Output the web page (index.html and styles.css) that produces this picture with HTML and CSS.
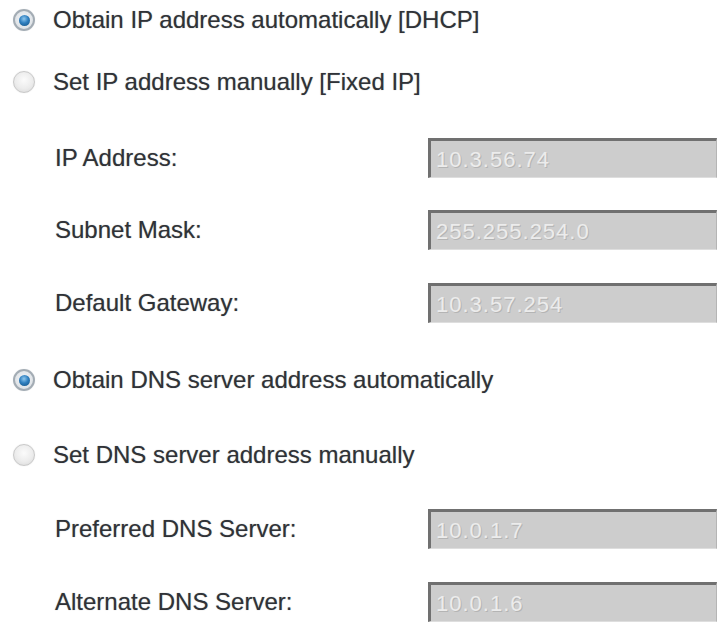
FILE: index.html
```html
<!DOCTYPE html>
<html>
<head>
<meta charset="utf-8">
<link rel="stylesheet" href="styles.css">
</head>
<body>
<div class="form">
  <div class="row radio-row r1"><span class="radio checked"><span class="dot"></span></span><span class="text">Obtain IP address automatically [DHCP]</span></div>
  <div class="row radio-row r2"><span class="radio"></span><span class="text">Set IP address manually [Fixed IP]</span></div>
  <div class="row field-row r3"><span class="label">IP Address:</span><div class="input">10.3.56.74</div></div>
  <div class="row field-row r4"><span class="label">Subnet Mask:</span><div class="input">255.255.254.0</div></div>
  <div class="row field-row r5"><span class="label">Default Gateway:</span><div class="input">10.3.57.254</div></div>
  <div class="row radio-row r6"><span class="radio checked"><span class="dot"></span></span><span class="text">Obtain DNS server address automatically</span></div>
  <div class="row radio-row r7"><span class="radio"></span><span class="text">Set DNS server address manually</span></div>
  <div class="row field-row r8"><span class="label">Preferred DNS Server:</span><div class="input">10.0.1.7</div></div>
  <div class="row field-row r9"><span class="label">Alternate DNS Server:</span><div class="input">10.0.1.6</div></div>
</div>
</body>
</html>
```
FILE: styles.css
```css
html, body {
  margin: 0;
  padding: 0;
  background: #ffffff;
}
body {
  font-family: "Liberation Sans", Arial, sans-serif;
  color: #2f3237;
  overflow: hidden;
}
.form {
  display: flex;
  flex-direction: column;
  width: 717px;
}
.row {
  height: 40px;
  display: flex;
  align-items: center;
}
.r2 { margin-top: 22px; }
.r3 { margin-top: 36px; }
.r4 { margin-top: 32px; }
.r5 { margin-top: 33px; }
.r6 { margin-top: 37px; }
.r7 { margin-top: 35px; }
.r8 { margin-top: 34px; }
.r9 { margin-top: 33px; }

.radio-row {
  padding-left: 13px;
}
.text {
  font-size: 24px;
  margin-left: 18px;
  text-shadow: 0 0 1px rgba(40, 40, 40, 0.45);
}
.radio {
  width: 22px;
  height: 22px;
  box-sizing: border-box;
  border-radius: 50%;
  border: 1px solid #c9c9c9;
  background: radial-gradient(circle at 50% 40%, #fbfbfb 0%, #ececec 55%, #d6d6d6 100%);
  box-shadow: 0 0 1px rgba(0, 0, 0, 0.15);
  display: flex;
  align-items: center;
  justify-content: center;
  flex: none;
}
.radio.checked {
  border: 2px solid #a3acb4;
  background: radial-gradient(circle at 50% 45%, #f4f6f8 0%, #dfe3e7 70%, #c2c8ce 100%);
}
.dot {
  width: 11px;
  height: 11px;
  border-radius: 50%;
  background: radial-gradient(circle at 45% 35%, #8fc8ee 0%, #2f7fbf 45%, #13507f 100%);
}

.field-row {
  display: grid;
  grid-template-columns: 428px 1fr;
  align-items: center;
}
.label {
  padding-left: 55px;
  font-size: 24px;
  text-shadow: 0 0 1px rgba(40, 40, 40, 0.45);
}
.input {
  height: 40px;
  box-sizing: border-box;
  background: #cdcdcd;
  border-top: 3px solid #707070;
  border-left: 3px solid #707070;
  border-right: 1px solid #b5b5b5;
  border-bottom: 1px solid #dedede;
  padding-left: 5px;
  padding-top: 2px;
  font-size: 22px;
  line-height: 34px;
  color: #ececec;
  text-shadow: 1px 1px 0 #b4b4b4;
  letter-spacing: 1px;
}
```
